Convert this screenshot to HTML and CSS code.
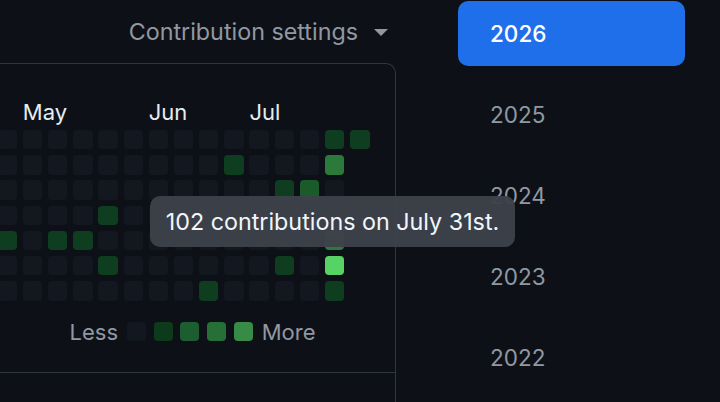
FILE: index.html
```html
<!DOCTYPE html>
<html lang="en">
<head>
<meta charset="utf-8">
<title>Contributions</title>
<link rel="stylesheet" href="styles.css">
</head>
<body>
<div class="page">
  <div class="main">
    <div class="settings-row">
      <span class="settings">Contribution settings</span>
      <span class="caret"></span>
    </div>
    <div class="box">
      <div class="graph">
        <div class="months">
          <span class="month m-may">May</span>
          <span class="month m-jun">Jun</span>
          <span class="month m-jul">Jul</span>
        </div>
        <div class="cells">
          <!-- col -1 -->
          <i class="c"></i><i class="c"></i><i class="c"></i><i class="c"></i><i class="c l1"></i><i class="c"></i><i class="c"></i>
          <!-- col 0 -->
          <i class="c"></i><i class="c"></i><i class="c"></i><i class="c"></i><i class="c"></i><i class="c"></i><i class="c"></i>
          <!-- col 1 -->
          <i class="c"></i><i class="c"></i><i class="c"></i><i class="c"></i><i class="c l1"></i><i class="c"></i><i class="c"></i>
          <!-- col 2 -->
          <i class="c"></i><i class="c"></i><i class="c"></i><i class="c"></i><i class="c l1"></i><i class="c"></i><i class="c"></i>
          <!-- col 3 -->
          <i class="c"></i><i class="c"></i><i class="c"></i><i class="c l1"></i><i class="c"></i><i class="c l1"></i><i class="c"></i>
          <!-- col 4 -->
          <i class="c"></i><i class="c"></i><i class="c"></i><i class="c"></i><i class="c"></i><i class="c"></i><i class="c"></i>
          <!-- col 5 -->
          <i class="c"></i><i class="c"></i><i class="c"></i><i class="c"></i><i class="c"></i><i class="c"></i><i class="c"></i>
          <!-- col 6 -->
          <i class="c"></i><i class="c"></i><i class="c"></i><i class="c"></i><i class="c"></i><i class="c"></i><i class="c"></i>
          <!-- col 7 -->
          <i class="c"></i><i class="c"></i><i class="c"></i><i class="c"></i><i class="c"></i><i class="c"></i><i class="c l1"></i>
          <!-- col 8 -->
          <i class="c"></i><i class="c l1"></i><i class="c"></i><i class="c"></i><i class="c"></i><i class="c"></i><i class="c"></i>
          <!-- col 9 -->
          <i class="c"></i><i class="c"></i><i class="c"></i><i class="c"></i><i class="c"></i><i class="c"></i><i class="c"></i>
          <!-- col 10 -->
          <i class="c"></i><i class="c"></i><i class="c l1"></i><i class="c"></i><i class="c"></i><i class="c l1"></i><i class="c"></i>
          <!-- col 11 -->
          <i class="c"></i><i class="c"></i><i class="c l2"></i><i class="c"></i><i class="c"></i><i class="c"></i><i class="c"></i>
          <!-- col 12 -->
          <i class="c l1"></i><i class="c l3"></i><i class="c"></i><i class="c"></i><i class="c l3"></i><i class="c l4"></i><i class="c l1"></i>
          <!-- col 13 -->
          <i class="c l1"></i>
        </div>
        <div class="legend">
          <span class="legend-text less">Less</span>
          <span class="legend-cells">
            <i class="lc lc0"></i><i class="lc lc1"></i><i class="lc lc2"></i><i class="lc lc3"></i><i class="lc lc4"></i>
          </span>
          <span class="legend-text">More</span>
        </div>
      </div>
      <div class="box-footer"></div>
    </div>
  </div>
  <nav class="years">
    <a class="year active">2026</a>
    <a class="year">2025</a>
    <a class="year">2024</a>
    <a class="year">2023</a>
    <a class="year">2022</a>
  </nav>
  <div class="tooltip">102 contributions on July 31st.</div>
</div>
</body>
</html>
```

FILE: styles.css
```css
html, body {
  margin: 0;
  padding: 0;
  background: #0d1117;
}
body {
  width: 720px;
  height: 402px;
  overflow: hidden;
  font-family: Inter, "Noto Sans", sans-serif;
  font-size: 22px;
  color: #9198a1;
}
.page {
  position: relative;
  display: flex;
  width: 720px;
  height: 402px;
  overflow: hidden;
}
.main {
  flex: none;
  width: 396px;
}
.settings-row {
  height: 63px;
  display: flex;
  align-items: center;
  justify-content: flex-end;
  padding-right: 8px;
}
.settings {
  color: #9198a1;
  font-size: 23.3px;
  line-height: 30px;
}
.caret {
  width: 0;
  height: 0;
  margin-left: 16px;
  margin-top: 2px;
  border-left: 7px solid transparent;
  border-right: 7px solid transparent;
  border-top: 7px solid #9198a1;
}
.box {
  margin-left: -40px;
  border: 1px solid #30363d;
  border-bottom: none;
  border-radius: 10px 10px 0 0;
  height: 400px;
}
.graph {
  padding: 33px 0 25px 36.6px;
}
.months {
  display: grid;
  grid-template-columns: repeat(15, 19.4px);
  column-gap: 5.8px;
  height: 30px;
  line-height: 30px;
}
.month {
  color: #e6edf3;
  white-space: nowrap;
  grid-row: 1;
}
.m-may { grid-column: 2; }
.m-jun { grid-column: 7; }
.m-jul { grid-column: 11; }
.cells {
  margin-top: 3px;
  display: grid;
  grid-auto-flow: column;
  grid-template-rows: repeat(7, 19.4px);
  grid-auto-columns: 19.4px;
  gap: 5.8px;
  justify-content: start;
}
.c {
  display: block;
  border-radius: 4px;
  background: #131820;
}
.c.l1 { background: #0f3d1f; }
.c.l2 { background: #1a5a2b; }
.c.l3 { background: #2b7a3c; }
.c.l4 { background: #56d364; }
.legend {
  margin-top: 16px;
  margin-left: -36.6px;
  display: grid;
  grid-template-columns: 157px auto auto;
  justify-content: start;
  column-gap: 9px;
  align-items: center;
  height: 30px;
}
.legend-text {
  color: #9198a1;
  line-height: 30px;
}
.less {
  text-align: right;
}
.legend-cells {
  display: flex;
  gap: 7.7px;
}
.lc {
  display: block;
  width: 19px;
  height: 19px;
  border-radius: 4px;
}
.lc0 { background: #131820; }
.lc1 { background: #0e3a1c; }
.lc2 { background: #1c5e30; }
.lc3 { background: #267038; }
.lc4 { background: #388a47; }
.box-footer {
  border-top: 1px solid #30363d;
  height: 60px;
}
.years {
  flex: none;
  margin-left: 62px;
  width: 227px;
  padding-top: 1px;
  display: flex;
  flex-direction: column;
  gap: 16px;
}
.year {
  display: block;
  height: 65px;
  line-height: 65px;
  padding-left: 32px;
  border-radius: 10px;
  color: #9198a1;
  font-size: 22.5px;
}
.year.active {
  background: #1f6feb;
  color: #ffffff;
  font-weight: 500;
}
.tooltip {
  position: absolute;
  left: 150px;
  top: 196px;
  width: 365px;
  height: 51px;
  line-height: 51px;
  box-sizing: border-box;
  text-align: center;
  border-radius: 10px;
  background: rgba(61, 66, 74, 0.96);
  color: #f0f6fc;
  font-size: 23.3px;
  white-space: nowrap;
}
```
